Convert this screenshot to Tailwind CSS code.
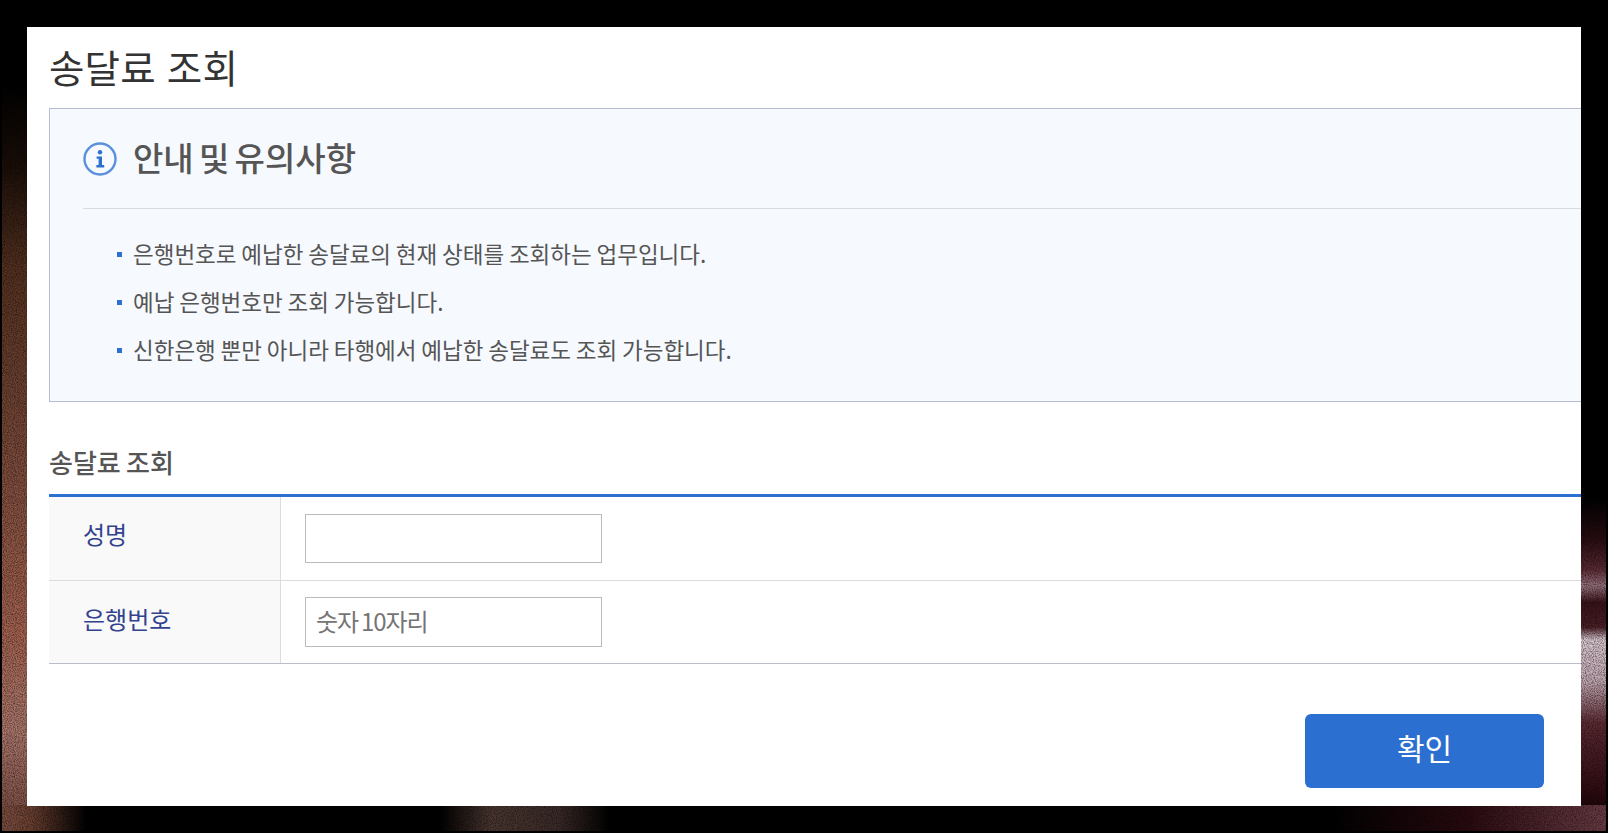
<!DOCTYPE html>
<html lang="ko">
<head>
    <meta charset="UTF-8">
    <title>송달료 조회</title>
    <script src="https://cdn.jsdelivr.net/npm/@tailwindcss/browser@4"></script>
</head>
<body class="bg-black font-['Noto_Sans_CJK_KR','Noto_Sans',sans-serif]">
    <div class="relative w-[1608px] h-[833px] overflow-hidden bg-black pt-[27px] pl-[27px]">
        <!-- backdrop photo behind the popup -->
        <svg class="absolute inset-0" width="1608" height="833" viewBox="0 0 1608 833">
            <defs>
                <linearGradient id="leftEdge" x1="0" y1="0" x2="0" y2="1">
                    <stop offset="0.1" stop-color="#000"/>
                    <stop offset="0.2" stop-color="#1a0e08"/>
                    <stop offset="0.32" stop-color="#53301f"/>
                    <stop offset="0.55" stop-color="#7a4a3a"/>
                    <stop offset="0.76" stop-color="#a2614f"/>
                    <stop offset="0.88" stop-color="#a9766a"/>
                    <stop offset="1" stop-color="#72453a"/>
                </linearGradient>
                <linearGradient id="rightEdge" x1="0" y1="0" x2="0" y2="1">
                    <stop offset="0.6" stop-color="#000"/>
                    <stop offset="0.65" stop-color="#2a0d12"/>
                    <stop offset="0.685" stop-color="#5a2a33"/>
                    <stop offset="0.705" stop-color="#94707c"/>
                    <stop offset="0.725" stop-color="#3a1218"/>
                    <stop offset="0.755" stop-color="#4a1f26"/>
                    <stop offset="0.77" stop-color="#d8c6cf"/>
                    <stop offset="0.82" stop-color="#c0a6b0"/>
                    <stop offset="0.87" stop-color="#5c2a32"/>
                    <stop offset="0.95" stop-color="#300c12"/>
                    <stop offset="0.975" stop-color="#1a0508"/>
                    <stop offset="1" stop-color="#6a3c44"/>
                </linearGradient>
                <linearGradient id="bottomLeft" x1="0" y1="0" x2="1" y2="0">
                    <stop offset="0" stop-color="#7c4e40"/>
                    <stop offset="0.35" stop-color="#6a3f30"/>
                    <stop offset="1" stop-color="#000"/>
                </linearGradient>
                <linearGradient id="bottomMid" x1="0" y1="0" x2="1" y2="0">
                    <stop offset="0" stop-color="#000"/>
                    <stop offset="0.3" stop-color="#4a3630"/>
                    <stop offset="0.7" stop-color="#3a2a28"/>
                    <stop offset="1" stop-color="#000"/>
                </linearGradient>
                <linearGradient id="bottomRight" x1="0" y1="0" x2="1" y2="0">
                    <stop offset="0" stop-color="#000"/>
                    <stop offset="0.5" stop-color="#2a0a10"/>
                    <stop offset="1" stop-color="#6a3c44"/>
                </linearGradient>
                <filter id="grain" x="0" y="0" width="100%" height="100%">
                    <feTurbulence type="fractalNoise" baseFrequency="0.9" numOctaves="2" seed="4"/>
                    <feColorMatrix values="0 0 0 0 0  0 0 0 0 0  0 0 0 0 0  1.1 0 0 0 -0.4"/>
                </filter>
            </defs>
            <rect x="2" y="0" width="26" height="831" fill="url(#leftEdge)"/>
            <rect x="1580" y="0" width="26" height="831" fill="url(#rightEdge)"/>
            <rect x="2" y="805" width="84" height="26" fill="url(#bottomLeft)"/>
            <rect x="440" y="805" width="170" height="26" fill="url(#bottomMid)"/>
            <rect x="1330" y="805" width="276" height="26" fill="url(#bottomRight)"/>
            <rect x="0" y="0" width="1608" height="833" filter="url(#grain)"/>
        </svg>

        <div class="relative w-[1554px] h-[779px] bg-white overflow-hidden pl-[22px]">
            <div class="w-[1570px]">
                <h1 class="h-[81px] flex items-center pb-[2px] text-[38.5px] tracking-[0.2px] font-normal text-[#333]">송달료 조회</h1>

                <!-- notice box, runs past the right edge of the popup -->
                <div class="h-[294px] border border-[#b4bcd8] bg-[#f6f9fe] pl-[33px]">
                    <div class="h-[100px] flex items-center gap-[16px] border-b border-[#d8dbe0]">
                        <svg width="34" height="34" viewBox="0 0 34 34" fill="none">
                            <circle cx="17" cy="17" r="15.5" stroke="#5b8fdc" stroke-width="2.4"/>
                            <circle cx="17" cy="10.2" r="2.2" fill="#2d70d0"/>
                            <path d="M13.6 14.4h5.4v8.6h2.2v2.4h-7.8V23h2.2v-6.2h-2z" fill="#2d70d0"/>
                        </svg>
                        <h2 class="pb-[2px] text-[33px] [word-spacing:-4px] font-medium text-[#555]">안내 및 유의사항</h2>
                    </div>
                    <ul class="pt-[21px] pl-[34px] text-[22.5px] [word-spacing:-1.5px] text-[#555]">
                        <li class="h-[48px] flex items-center gap-[11px]"><span class="w-[5px] h-[5px] bg-[#2d70d0]"></span>은행번호로 예납한 송달료의 현재 상태를 조회하는 업무입니다.</li>
                        <li class="h-[48px] flex items-center gap-[11px]"><span class="w-[5px] h-[5px] bg-[#2d70d0]"></span>예납 은행번호만 조회 가능합니다.</li>
                        <li class="h-[48px] flex items-center gap-[11px]"><span class="w-[5px] h-[5px] bg-[#2d70d0]"></span>신한은행 뿐만 아니라 타행에서 예납한 송달료도 조회 가능합니다.</li>
                    </ul>
                </div>

                <h3 class="h-[92px] flex items-center pt-[26px] text-[26px] [word-spacing:-2px] font-medium text-[#555]">송달료 조회</h3>

                <div class="border-t-[3px] border-[#2b6fd1]">
                    <div class="flex h-[84px] border-b border-[#dcdcdc]">
                        <div class="w-[232px] shrink-0 bg-[#f9f9f9] border-r border-[#dcdcdc] pl-[34px] pt-[19px] text-[24px] text-[#33428f]">성명</div>
                        <div class="pl-[24px] pt-[17px]">
                            <input type="text" class="block w-[297px] h-[49px] border border-[#bbb] px-[10px] text-[24px]">
                        </div>
                    </div>
                    <div class="flex h-[83px] border-b border-[#b9bccb]">
                        <div class="w-[232px] shrink-0 bg-[#f9f9f9] border-r border-[#dcdcdc] pl-[34px] pt-[20px] text-[24px] text-[#33428f]">은행번호</div>
                        <div class="pl-[24px] pt-[16px]">
                            <input type="text" placeholder="숫자 10자리" class="block w-[297px] h-[50px] border border-[#bbb] px-[10px] pb-[3px] text-[24px] tracking-[-1px] [word-spacing:-3px] placeholder:text-[#757575]">
                        </div>
                    </div>
                </div>

                <div class="flex justify-end pr-[75px] pt-[50px]">
                    <button class="w-[239px] h-[74px] pb-[8px] rounded-[6px] bg-[#2b6fd1] text-white text-[30px]">확인</button>
                </div>
            </div>
        </div>
    </div>
</body>
</html>
